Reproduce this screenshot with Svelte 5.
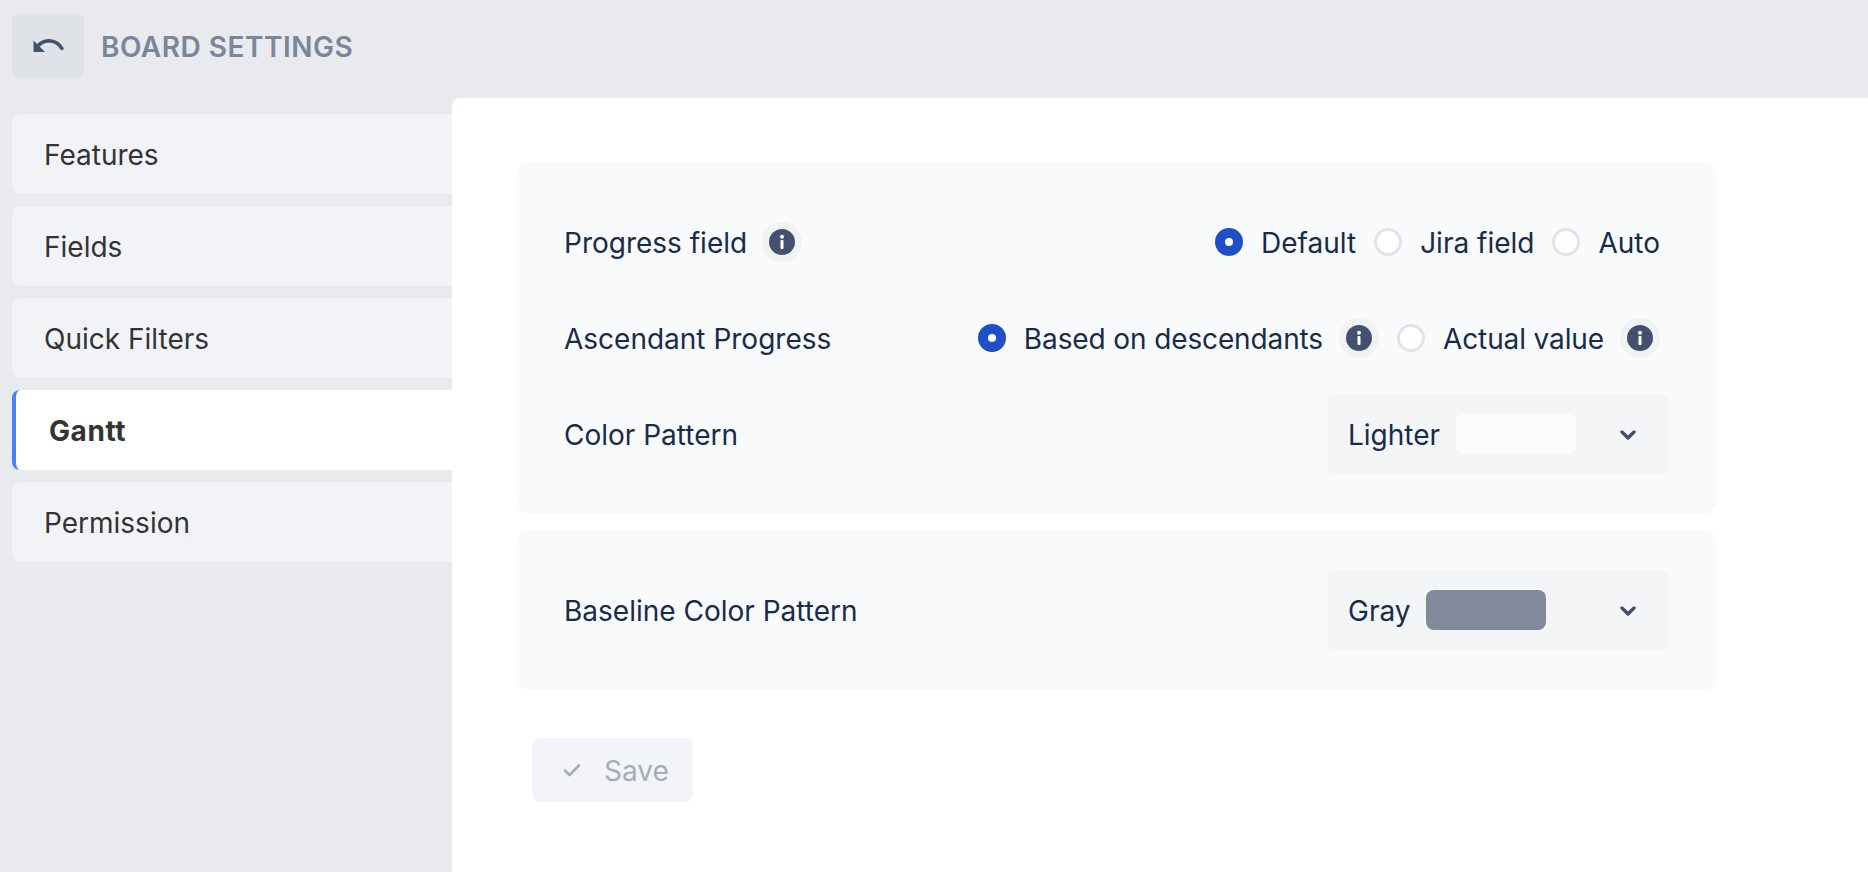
<script lang="ts">
  const tabs = ['Features', 'Fields', 'Quick Filters', 'Gantt', 'Permission'];
  let active = $state('Gantt');
  let progress = $state('Default');
  let ascendant = $state('Based on descendants');
</script>

{#snippet info()}
  <span class="info">
    <svg width="26" height="26" viewBox="0 0 26 26">
      <circle cx="13" cy="13" r="13" fill="#42526e" />
      <circle cx="13" cy="7.800" r="2" fill="#fff" />
      <rect x="11.500" y="11" width="3" height="9" rx="1" fill="#fff" />
    </svg>
  </span>
{/snippet}

{#snippet chevron()}
  <svg class="chevron" width="16" height="12" viewBox="0 0 16 12">
    <path d="M2 3l6 6 6-6" fill="none" stroke="#42526e" stroke-width="3.4" stroke-linecap="round" stroke-linejoin="round" />
  </svg>
{/snippet}

{#snippet radio(label, current, select)}
  <button class="radio-item" onclick={() => select(label)}>
    <span class="radio" class:checked={current === label}></span>
    <span class="txt">{label}</span>
  </button>
{/snippet}

<div class="page">
  <header class="topbar">
    <button class="back" aria-label="Back">
      <svg width="32" height="16" viewBox="0 0 32 16">
        <path d="M5 9C9 3.800 14 2.400 19 3c4.600 .6 8.400 3.200 10.800 7.400" fill="none" stroke="#42526e" stroke-width="3.600" stroke-linecap="round" />
        <path d="M1.500 2.500v10.500a1 1 0 0 0 1 1h10.500z" fill="#42526e" />
      </svg>
    </button>
    <span class="title txt">BOARD SETTINGS</span>
  </header>

  <div class="body">
    <nav class="sidebar">
      {#each tabs as tab}
        <button class="tab" class:active={active === tab} onclick={() => (active = tab)}>
          <span class="txt">{tab}</span>
        </button>
      {/each}
    </nav>

    <main class="main">
      <section class="card">
        <div class="row">
          <div class="label">
            <span class="txt">Progress field</span>
            {@render info()}
          </div>
          <div class="options">
            {@render radio('Default', progress, (v) => (progress = v))}
            {@render radio('Jira field', progress, (v) => (progress = v))}
            {@render radio('Auto', progress, (v) => (progress = v))}
          </div>
        </div>

        <div class="row">
          <div class="label"><span class="txt">Ascendant Progress</span></div>
          <div class="options tight">
            {@render radio('Based on descendants', ascendant, (v) => (ascendant = v))}
            {@render info()}
            {@render radio('Actual value', ascendant, (v) => (ascendant = v))}
            {@render info()}
          </div>
        </div>

        <div class="row flush">
          <div class="label"><span class="txt">Color Pattern</span></div>
          <div class="select">
            <span class="txt">Lighter</span>
            <span class="swatch lighter"></span>
            {@render chevron()}
          </div>
        </div>
      </section>

      <section class="card">
        <div class="row flush">
          <div class="label"><span class="txt">Baseline Color Pattern</span></div>
          <div class="select">
            <span class="txt">Gray</span>
            <span class="swatch gray"></span>
            {@render chevron()}
          </div>
        </div>
      </section>

      <button class="save" disabled>
        <svg width="18" height="14" viewBox="0 0 18 14">
          <path d="M2 7.500l4.500 4.500L16 2.500" fill="none" stroke="#a5adba" stroke-width="2.600" stroke-linecap="round" stroke-linejoin="round" />
        </svg>
        <span class="txt">Save</span>
      </button>
    </main>
  </div>
</div>

<style>
  :global(body) {
    margin: 0;
    background: #e8eaee;
  }

  .page {
    width: 1868px;
    height: 872px;
    display: flex;
    flex-direction: column;
    overflow: hidden;
    background: #e8eaee;
    font-family: Inter, "Liberation Sans", sans-serif;
    font-size: 28px;
    color: #172b4d;
  }

  button {
    font: inherit;
    border: none;
    padding: 0;
    background: none;
    color: inherit;
  }

  /* Inter sits a touch high in its line box */
  .txt {
    padding-top: 2px;
  }

  .topbar {
    height: 98px;
    flex-shrink: 0;
    box-sizing: border-box;
    padding: 14px 12px 20px;
    display: flex;
    align-items: center;
    gap: 17px;
  }

  .back {
    width: 72px;
    height: 64px;
    border-radius: 6px;
    background: #dfe2e7;
    display: flex;
    align-items: center;
    justify-content: center;
  }

  .title {
    font-weight: 600;
    color: #7a869a;
    letter-spacing: 0.5px;
  }

  .body {
    flex: 1;
    display: flex;
    min-height: 0;
  }

  .sidebar {
    width: 452px;
    flex-shrink: 0;
    box-sizing: border-box;
    padding: 16px 0 0 12px;
    display: flex;
    flex-direction: column;
    gap: 12px;
  }

  .tab {
    height: 80px;
    flex-shrink: 0;
    box-sizing: border-box;
    padding-left: 32px;
    display: flex;
    align-items: center;
    text-align: left;
    background: #f2f3f6;
    border-radius: 8px 0 0 8px;
    color: #333;
  }

  .tab.active {
    background: #fff;
    border-left: 4px solid #4384f5;
    padding-left: 33px;
    font-weight: 700;
    letter-spacing: 0.6px;
  }

  .main {
    flex: 1;
    background: #fff;
    border-top-left-radius: 8px;
    box-sizing: border-box;
    padding: 64px 0 0 65px;
    display: flex;
    flex-direction: column;
    align-items: flex-start;
    gap: 16px;
  }

  .card {
    width: 1199px;
    box-sizing: border-box;
    padding: 40px 48px 40px 47px;
    background: #f9fafb;
    border-radius: 12px;
    display: flex;
    flex-direction: column;
    gap: 16px;
  }

  .row {
    height: 80px;
    display: flex;
    align-items: center;
    justify-content: space-between;
    padding-right: 8px;
  }

  .row.flush {
    padding-right: 0;
  }

  .label {
    display: flex;
    align-items: center;
    gap: 15px;
  }

  .options {
    display: flex;
    align-items: center;
    gap: 18px;
  }

  .options.tight .txt {
    letter-spacing: -0.12px;
  }

  .options.tight .info {
    margin-left: -2px;
  }

  .radio-item {
    display: flex;
    align-items: center;
    gap: 18px;
  }

  .radio {
    width: 28px;
    height: 28px;
    box-sizing: border-box;
    border-radius: 50%;
    border: 3px solid #e1e3e9;
    background: #fff;
  }

  .radio.checked {
    border: 10px solid #1f50c8;
  }

  .info {
    width: 40px;
    height: 40px;
    border-radius: 50%;
    background: #f1f2f4;
    display: flex;
    align-items: center;
    justify-content: center;
  }

  .info svg {
    display: block;
  }

  .select {
    position: relative;
    width: 340px;
    height: 80px;
    box-sizing: border-box;
    padding-left: 20px;
    background: #f4f5f7;
    border-radius: 6px;
    display: flex;
    align-items: center;
    gap: 16px;
  }

  .swatch {
    width: 120px;
    height: 40px;
    border-radius: 8px;
  }

  .swatch.lighter {
    background: #fafbfc;
  }

  .swatch.gray {
    background: #818a9b;
  }

  .chevron {
    position: absolute;
    right: 32px;
    top: 35px;
  }

  .save {
    margin: 32px 0 0 15px;
    width: 161px;
    height: 64px;
    border-radius: 8px;
    background: #f3f4f7;
    color: #a5adba;
    display: flex;
    align-items: center;
    padding-left: 31px;
    box-sizing: border-box;
    gap: 23px;
  }
</style>
